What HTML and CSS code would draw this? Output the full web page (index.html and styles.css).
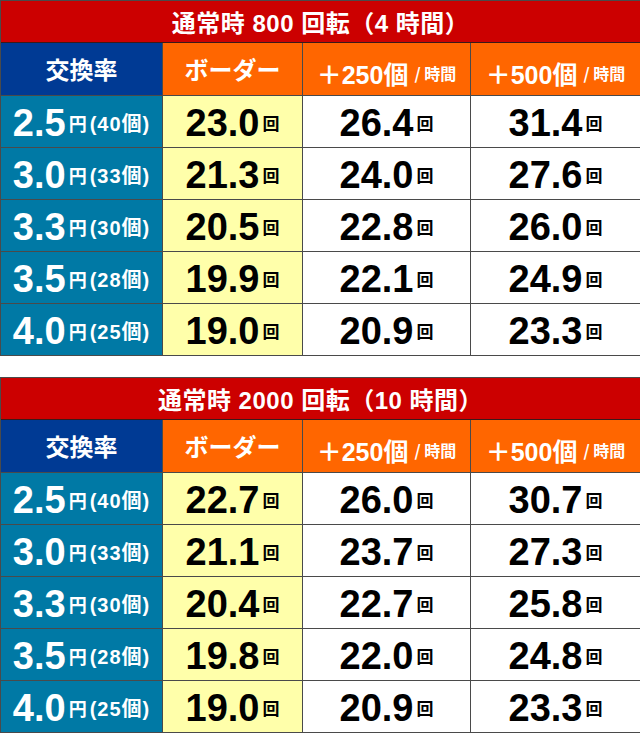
FILE: index.html
```html
<!DOCTYPE html>
<html lang="ja">
<head>
<meta charset="utf-8">
<title>ボーダー表</title>
<link rel="stylesheet" href="styles.css">
</head>
<body>
<section class="tbl">
  <div class="title">通常時 800 回転（4 時間）</div>
  <div class="grid">
    <div class="h h-rate">交換率</div>
    <div class="h h-border">ボーダー</div>
    <div class="h h-plus">＋250個<span class="per">/ 時間</span></div>
    <div class="h h-plus">＋500個<span class="per">/ 時間</span></div>

    <div class="c rate"><span class="rn">2.5</span><span class="yen">円</span><span class="pc">(40個)</span></div>
    <div class="c bd"><span class="n">23.0</span><span class="k">回</span></div>
    <div class="c wh"><span class="n">26.4</span><span class="k">回</span></div>
    <div class="c wh"><span class="n">31.4</span><span class="k">回</span></div>

    <div class="c rate"><span class="rn">3.0</span><span class="yen">円</span><span class="pc">(33個)</span></div>
    <div class="c bd"><span class="n">21.3</span><span class="k">回</span></div>
    <div class="c wh"><span class="n">24.0</span><span class="k">回</span></div>
    <div class="c wh"><span class="n">27.6</span><span class="k">回</span></div>

    <div class="c rate"><span class="rn">3.3</span><span class="yen">円</span><span class="pc">(30個)</span></div>
    <div class="c bd"><span class="n">20.5</span><span class="k">回</span></div>
    <div class="c wh"><span class="n">22.8</span><span class="k">回</span></div>
    <div class="c wh"><span class="n">26.0</span><span class="k">回</span></div>

    <div class="c rate"><span class="rn">3.5</span><span class="yen">円</span><span class="pc">(28個)</span></div>
    <div class="c bd"><span class="n">19.9</span><span class="k">回</span></div>
    <div class="c wh"><span class="n">22.1</span><span class="k">回</span></div>
    <div class="c wh"><span class="n">24.9</span><span class="k">回</span></div>

    <div class="c rate"><span class="rn">4.0</span><span class="yen">円</span><span class="pc">(25個)</span></div>
    <div class="c bd"><span class="n">19.0</span><span class="k">回</span></div>
    <div class="c wh"><span class="n">20.9</span><span class="k">回</span></div>
    <div class="c wh"><span class="n">23.3</span><span class="k">回</span></div>
  </div>
</section>

<section class="tbl second">
  <div class="title">通常時 2000 回転（10 時間）</div>
  <div class="grid">
    <div class="h h-rate">交換率</div>
    <div class="h h-border">ボーダー</div>
    <div class="h h-plus">＋250個<span class="per">/ 時間</span></div>
    <div class="h h-plus">＋500個<span class="per">/ 時間</span></div>

    <div class="c rate"><span class="rn">2.5</span><span class="yen">円</span><span class="pc">(40個)</span></div>
    <div class="c bd"><span class="n">22.7</span><span class="k">回</span></div>
    <div class="c wh"><span class="n">26.0</span><span class="k">回</span></div>
    <div class="c wh"><span class="n">30.7</span><span class="k">回</span></div>

    <div class="c rate"><span class="rn">3.0</span><span class="yen">円</span><span class="pc">(33個)</span></div>
    <div class="c bd"><span class="n">21.1</span><span class="k">回</span></div>
    <div class="c wh"><span class="n">23.7</span><span class="k">回</span></div>
    <div class="c wh"><span class="n">27.3</span><span class="k">回</span></div>

    <div class="c rate"><span class="rn">3.3</span><span class="yen">円</span><span class="pc">(30個)</span></div>
    <div class="c bd"><span class="n">20.4</span><span class="k">回</span></div>
    <div class="c wh"><span class="n">22.7</span><span class="k">回</span></div>
    <div class="c wh"><span class="n">25.8</span><span class="k">回</span></div>

    <div class="c rate"><span class="rn">3.5</span><span class="yen">円</span><span class="pc">(28個)</span></div>
    <div class="c bd"><span class="n">19.8</span><span class="k">回</span></div>
    <div class="c wh"><span class="n">22.0</span><span class="k">回</span></div>
    <div class="c wh"><span class="n">24.8</span><span class="k">回</span></div>

    <div class="c rate"><span class="rn">4.0</span><span class="yen">円</span><span class="pc">(25個)</span></div>
    <div class="c bd"><span class="n">19.0</span><span class="k">回</span></div>
    <div class="c wh"><span class="n">20.9</span><span class="k">回</span></div>
    <div class="c wh"><span class="n">23.3</span><span class="k">回</span></div>
  </div>
</section>
</body>
</html>
```

FILE: styles.css
```css
html, body {
  margin: 0;
  padding: 0;
  background: #ffffff;
}
body {
  width: 640px;
  font-family: "Liberation Sans", Arial, "Noto Sans CJK JP", sans-serif;
  font-weight: 700;
}
.tbl {
  border-top: 1px solid #4a4a4a;
  border-left: 1px solid #4a4a4a;
}
.second {
  margin-top: 21px;
}
.title {
  height: 41px;
  border-bottom: 1px solid #3a1a1a;
  background: #cc0000;
  color: #ffffff;
  display: flex;
  align-items: center;
  justify-content: center;
  font-family: "Liberation Sans", Arial, "Noto Sans CJK JP", sans-serif;
  font-size: 24px;
  letter-spacing: 0.5px;
}
.grid {
  display: grid;
  grid-template-columns: 162px 140px 168px 1fr;
  grid-template-rows: 53px repeat(5, 52px);
}
.grid > div {
  box-sizing: border-box;
  border-right: 1px solid #4a4a4a;
  border-bottom: 1px solid #4a4a4a;
  display: flex;
  align-items: center;
  justify-content: center;
}
.grid > div:nth-child(4n) {
  border-right: 0;
}
.h {
  color: #ffffff;
  font-family: "Noto Sans CJK JP", sans-serif;
  font-size: 24px;
  padding-bottom: 2px;
}
.h-rate {
  background: #003a94;
}
.h-border,
.h-plus {
  background: #ff6600;
}
.h-plus {
  font-family: "Liberation Sans", Arial, "Noto Sans CJK JP", sans-serif;
  font-size: 25px;
  align-items: baseline;
  padding-top: 10px;
}
.per {
  font-family: "Noto Sans CJK JP", sans-serif;
  font-size: 16px;
  margin-left: 6px;
}
.c {
  align-items: baseline;
  padding-top: 2px;
}
.c.rate {
  background: #0079a5;
  color: #ffffff;
}
.c.bd {
  background: #ffffaa;
  color: #000000;
}
.c.wh {
  background: #ffffff;
  color: #000000;
}
.rn {
  font-family: "Liberation Sans", Arial, sans-serif;
  font-size: 38px;
  line-height: 46px;
}
.yen {
  font-family: "Noto Sans CJK JP", sans-serif;
  font-size: 18px;
  margin-left: 3px;
}
.pc {
  font-family: "Liberation Sans", Arial, "Noto Sans CJK JP", sans-serif;
  font-size: 20px;
  letter-spacing: 1px;
  margin-left: 3px;
}
.n {
  font-family: "Liberation Sans", Arial, sans-serif;
  font-size: 38px;
  line-height: 46px;
}
.k {
  font-family: "Noto Sans CJK JP", sans-serif;
  font-size: 17px;
  margin-left: 3px;
}
```
